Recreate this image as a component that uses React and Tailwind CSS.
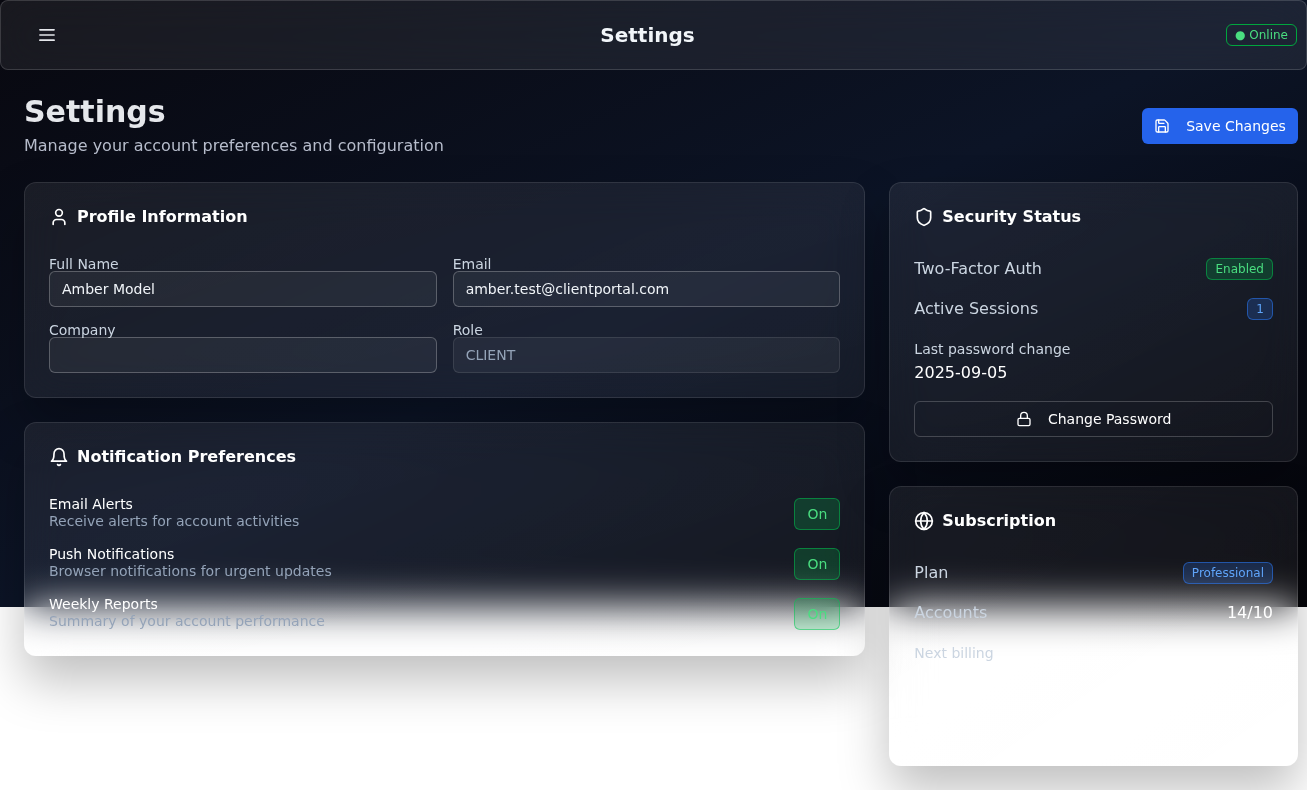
import React from "react";
import { User, Shield, Globe, Lock, Save } from "lucide-react";

const card = "rounded-xl border border-white/10 bg-gradient-to-br from-white/[0.07] to-white/[0.055] backdrop-blur-[20px] shadow-[0_25px_50px_rgba(0,0,0,0.25)] p-6";

function MenuIcon() {
  return (
    <svg viewBox="0 0 24 24" className="w-5 h-5 text-[#e5e7eb]" fill="none" stroke="currentColor" strokeWidth="2" strokeLinecap="round">
      <path d="M3.5 5.8h17M3.5 12h17M3.5 18.2h17" />
    </svg>
  );
}

function BellIcon({ className }) {
  return (
    <svg viewBox="0 0 24 24" className={className} fill="none" stroke="currentColor" strokeWidth="2" strokeLinecap="round" strokeLinejoin="round">
      <path d="M6 8a6 6 0 0 1 12 0c0 7 3 9 3 9H3s3-2 3-9" />
      <path d="M10.3 21a1.94 1.94 0 0 0 3.4 0" />
    </svg>
  );
}

function Title({ icon: I, children }) {
  return (
    <div className="flex items-center gap-2 h-5 mb-[30px]">
      <I className="w-5 h-5 text-white" strokeWidth={2} />
      <h3 className="text-base leading-5 font-bold text-white">{children}</h3>
    </div>
  );
}

function Field({ label, value, disabled }) {
  return (
    <div className="flex flex-col">
      <label className="text-sm leading-[14px] h-[14px] text-[#cbd5e1]">{label}</label>
      <div className={disabled
        ? "h-9 rounded-md border border-white/10 bg-white/5 px-3 flex items-center text-sm text-[#94a3b8]"
        : "h-9 rounded-md border border-white/25 bg-white/[0.05] px-3 flex items-center text-sm text-[#f1f5f9]"}>
        {value}
      </div>
    </div>
  );
}

function Toggle({ title, desc }) {
  return (
    <div className="flex items-center justify-between h-[34px]">
      <div className="pb-[2px]">
        <div className="text-sm leading-[17px] text-white">{title}</div>
        <div className="text-sm leading-[17px] text-[#94a3b8]">{desc}</div>
      </div>
      <button className="w-[46px] h-8 rounded-md border border-green-500/50 bg-green-500/20 text-sm text-[#4ade80]">On</button>
    </div>
  );
}

function Row({ label, children }) {
  return (
    <div className="flex items-center justify-between h-6">
      <span className="text-base text-[#cbd5e1]">{label}</span>
      {children}
    </div>
  );
}

function Badge({ color, children }) {
  const c = color === "green"
    ? "border-green-500/50 bg-green-500/20 text-[#4ade80]"
    : "border-blue-500/50 bg-blue-500/20 text-[#60a5fa]";
  return <span className={"h-[22px] px-2 rounded-md border text-xs flex items-center " + c}>{children}</span>;
}

export default function App() {
  return (
    <div className="min-h-screen bg-white bg-gradient-to-br from-[#08080f] via-[#0c1426] to-[#050509] bg-no-repeat bg-[length:100%_607px] font-['DejaVu_Sans',sans-serif] text-white">
      <header className="h-[70px] rounded-lg border border-white/15 bg-white/[0.07] backdrop-blur-[20px] flex items-center justify-between pl-[30px] pr-[9px]">
        <button className="w-[38px] h-8 flex items-center justify-start pl-[6px]">
          <MenuIcon />
        </button>
        <h1 className="text-xl font-bold text-[#f1f5f9]">Settings</h1>
        <span className="h-[22px] w-[71px] rounded-md border border-green-600 flex items-center justify-center text-xs text-[#4ade80]">
          ● Online
        </span>
      </header>

      <main className="pt-6 pl-6 pr-[9px] will-change-transform">
        <div className="flex items-center justify-between h-[64px] mb-6">
          <div>
            <h2 className="text-[30px] leading-9 font-bold text-[#e5e7eb]">Settings</h2>
            <p className="mt-1 text-base leading-6 text-[#b6bccb]">Manage your account preferences and configuration</p>
          </div>
          <button className="h-9 w-[156px] rounded-md bg-[#2563eb] flex items-center justify-center gap-4 text-sm text-white">
            <Save className="w-4 h-4" />Save Changes
          </button>
        </div>

        <div className="grid grid-cols-3 gap-6 items-start">
          <div className="col-span-2 flex flex-col gap-6">
            <section className={card}>
              <Title icon={User}>Profile Information</Title>
              <div className="grid grid-cols-2 gap-x-4 gap-y-4">
                <Field label="Full Name" value="Amber Model" />
                <Field label="Email" value="amber.test@clientportal.com" />
                <Field label="Company" value="" />
                <Field label="Role" value="CLIENT" disabled />
              </div>
            </section>
            <section className={card}>
              <Title icon={BellIcon}>Notification Preferences</Title>
              <div className="flex flex-col gap-4">
                <Toggle title="Email Alerts" desc="Receive alerts for account activities" />
                <Toggle title="Push Notifications" desc="Browser notifications for urgent updates" />
                <Toggle title="Weekly Reports" desc="Summary of your account performance" />
              </div>
            </section>
          </div>

          <div className="flex flex-col gap-6">
            <section className={card}>
              <Title icon={Shield}>Security Status</Title>
              <div className="flex flex-col gap-4">
                <Row label="Two-Factor Auth"><Badge color="green">Enabled</Badge></Row>
                <Row label="Active Sessions"><Badge color="blue">1</Badge></Row>
                <div>
                  <div className="text-sm leading-6 text-[#cbd5e1]">Last password change</div>
                  <div className="text-base leading-6 text-white">2025-09-05</div>
                </div>
                <button className="h-9 rounded-md border border-white/20 flex items-center justify-center gap-4 text-sm text-white">
                  <Lock className="w-4 h-4" />Change Password
                </button>
              </div>
            </section>
            <section className={card}>
              <Title icon={Globe}>Subscription</Title>
              <div className="flex flex-col gap-4">
                <Row label="Plan"><Badge color="blue">Professional</Badge></Row>
                <Row label="Accounts"><span className="text-base text-white">14/10</span></Row>
                <div>
                  <div className="text-sm leading-6 text-[#cbd5e1]">Next billing</div>
                  <div className="h-6" />
                </div>
                <div className="h-9" />
              </div>
            </section>
          </div>
        </div>
      </main>
    </div>
  );
}
